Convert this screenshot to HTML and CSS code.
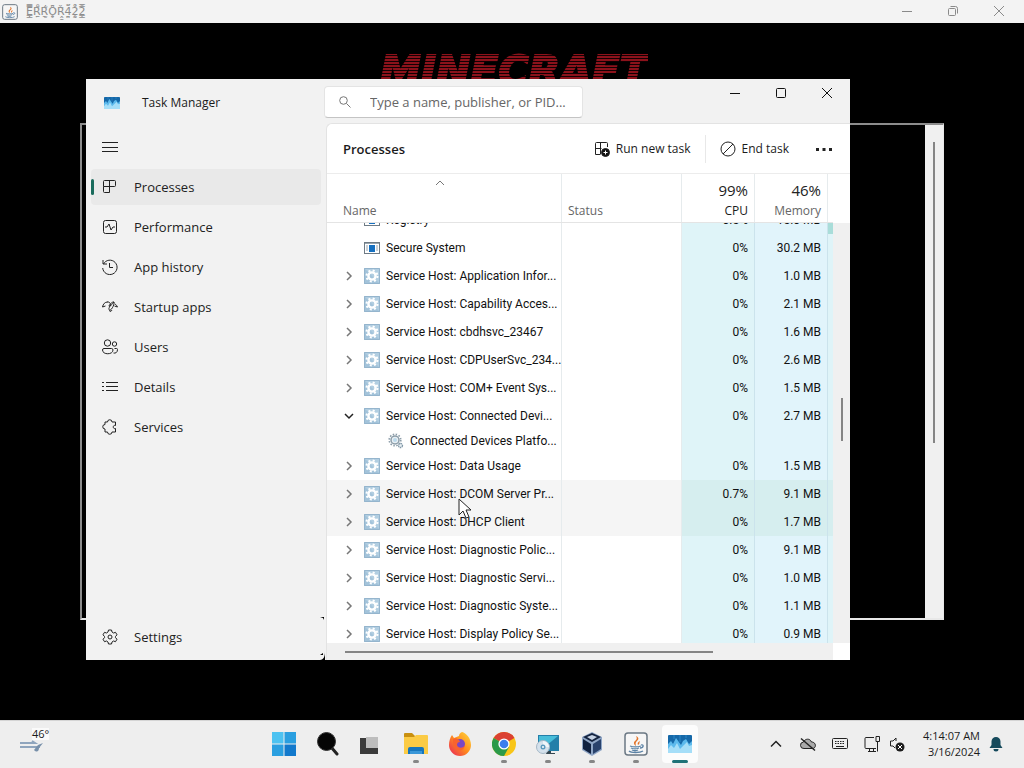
FILE: index.html
```html
<!DOCTYPE html>
<html lang="en">
<head>
    <meta charset="UTF-8">
    <meta name="viewport" content="width=device-width, initial-scale=1.0">
    <title>Desktop</title>
    <link rel="stylesheet" href="styles.css">
</head>
<body>
    <!-- shared icons -->
    <svg class="defs" width="0" height="0" aria-hidden="true">
        <symbol id="min" viewBox="0 0 12 12"><path d="M1 6.500h10" /></symbol>
        <symbol id="max" viewBox="0 0 12 12"><rect x="1.500" y="1.500" width="9" height="9" rx="1" /></symbol>
        <symbol id="restore" viewBox="0 0 12 12"><rect x="1.500" y="3.500" width="7" height="7" rx="1" /><path d="M3.500 1.500h5a2 2 0 0 1 2 2v5" /></symbol>
        <symbol id="close" viewBox="0 0 12 12"><path d="M1 1l10 10M11 1L1 11" /></symbol>
        <symbol id="chev" viewBox="0 0 8 10"><path d="M2 1l4 4-4 4" /></symbol>
        <symbol id="java" viewBox="0 0 24 24">
            <rect x="1" y="1" width="22" height="22" rx="3" fill="#f6f6f6" stroke="#6b7884" stroke-width="1.500" />
            <path d="M12 14c-4-3-1-5 0-6s1-2 0-4c4 2 2 4 1 5s-2 2-1 5zM14 13c-1-2 0-3 2-4-1 2 0 3-2 4z" fill="#e2742a" />
            <path d="M6 14c3 1 8 1 11 0M17 13c3-1 3 3-1 3M7 16c2 1 6 1 8 0M8 18c2 1 4 1 6 0M5 19c2 2 11 2 14 0" fill="none" stroke="#5b82a5" stroke-width="1.300" />
        </symbol>
        <symbol id="taskmgr" viewBox="0 0 24 18">
            <rect width="24" height="18" rx="1" fill="#1568a8" />
            <path d="M0 9l3-3 2 3 3-6 5 7 2-4 3-2 3 5 3-3v12H0z" fill="#5bb9ec" />
            <path d="M0 14l3-4 3 3 3-5 3 6 4-4 3-3 2 4 3-1v8H0z" fill="#a5def8" />
            <path d="M6 0v4M12 0v7M18 0v3" stroke="#2a86c6" stroke-width="1" />
        </symbol>
        <symbol id="gear" viewBox="0 0 16 16">
            <rect width="16" height="16" fill="#a3c3da" />
            <path d="M0 0h16v16" fill="#bdd5e6" opacity=".6" />
            <circle cx="8" cy="8" r="3.600" fill="none" stroke="#fff" stroke-width="2.400" />
            <circle cx="8" cy="8" r="5.500" fill="none" stroke="#fff" stroke-width="2" stroke-dasharray="2 2.320" />
            <path d="M.5.5h15v15H.5z" fill="none" stroke="#95b5cd" />
        </symbol>
        <symbol id="gears" viewBox="0 0 16 16">
            <circle cx="7" cy="7" r="4" fill="#e9f0f4" stroke="#8b9ca8" stroke-width="1.500" />
            <circle cx="7" cy="7" r="5.800" fill="none" stroke="#8b9ca8" stroke-width="1.600" stroke-dasharray="1.500 1.536" />
            <circle cx="7" cy="7" r="2" fill="#bcd9ea" />
            <circle cx="12.500" cy="12.500" r="2" fill="#e9f0f4" stroke="#7f96a6" stroke-width="1.300" stroke-dasharray="1.500 .6" />
        </symbol>
        <symbol id="app" viewBox="0 0 16 12">
            <rect x=".5" y=".5" width="15" height="11" fill="#fff" stroke="#6f7b85" />
            <path d="M1 1.500h14" stroke="#9aa6ae" />
            <rect x="5" y="3" width="6" height="7" fill="#1670c0" />
            <path d="M2 4h2M2 6h2M2 8h2M12 4h2M12 6h2M12 8h2" stroke="#95a3ad" />
        </symbol>
    </svg>

    <header class="app-bar">
        <svg class="app-logo"><use href="#java" /></svg>
        <span class="glitch">E&#x33f;&#x305;&#x333;&#x323;R&#x306;&#x30a;&#x323;&#x331;R&#x303;&#x307;&#x331;&#x32e;O&#x30a;&#x304;&#x325;&#x320;R&#x30c;&#x303;&#x32d;&#x331;4&#x30b;&#x306;&#x324;&#x32d;2&#x309;&#x30a;&#x330;&#x325;2&#x33f;&#x306;&#x333;&#x323;</span>
        <div class="controls muted">
            <button aria-label="Minimize"><svg><use href="#min" /></svg></button>
            <button aria-label="Restore"><svg><use href="#restore" /></svg></button>
            <button aria-label="Close"><svg><use href="#close" /></svg></button>
        </div>
    </header>

    <main class="desktop">
        <div class="game-title">MINECRAFT</div>
        <div class="console"><div class="console-scroll"></div></div>

        <section class="window">
            <div class="title-bar">
                <div class="title">
                    <svg width="16" height="12"><use href="#taskmgr" /></svg>
                    <span>Task Manager</span>
                </div>
                <label class="search">
                    <svg width="14" height="14" viewBox="0 0 14 14"><circle cx="5.500" cy="5.500" r="3.800" /><path d="M8.500 8.500l4 4" /></svg>
                    <input type="text" aria-label="Search processes" placeholder="Type a name, publisher, or PID...">
                </label>
                <div class="controls">
                    <button aria-label="Minimize"><svg><use href="#min" /></svg></button>
                    <button aria-label="Maximize"><svg><use href="#max" /></svg></button>
                    <button aria-label="Close"><svg><use href="#close" /></svg></button>
                </div>
            </div>

            <div class="window-body">
                <nav class="sidebar">
                    <button class="nav-item" aria-label="Menu"><svg viewBox="0 0 16 16"><path d="M0 3.500h16M0 8.500h16M0 12.500h16" /></svg></button>
                    <a href="#" class="nav-item active"><svg viewBox="0 0 16 16"><path d="M2.500 1.500h10a1 1 0 0 1 1 1v4a1 1 0 0 1-1 1h-11v-5a1 1 0 0 1 1-1zM7.500 1.500v12h-5a1 1 0 0 1-1-1v-5" /></svg>Processes</a>
                    <a href="#" class="nav-item"><svg viewBox="0 0 16 16"><rect x="1.500" y="1.500" width="13" height="13" rx="2" /><path d="M3 8h2l2-3 2 6 2-3h2" /></svg>Performance</a>
                    <a href="#" class="nav-item"><svg viewBox="0 0 16 16"><path d="M1 1v4h4M1.500 5a7.200 7.200 0 1 1-.8 4M7.500 4v4.500h3.500" /></svg>App history</a>
                    <a href="#" class="nav-item"><svg viewBox="0 0 16 16"><path d="M.5 8C1 5 3 3 5.500 3M13 5c1 .5 2 2 2.500 3M5 3c3-.5 4 2 3 4s-2 4 0 4 5-7 4-8-5 3-5 4 3-1 5-4M.5 8l3-1M15.500 8l-3-1M8 11c-1 2 1 2 2 0" /></svg>Startup apps</a>
                    <a href="#" class="nav-item"><svg viewBox="0 0 16 16"><circle cx="5.500" cy="4" r="3.200" /><circle cx="12.500" cy="5" r="2.200" /><path d="M2 9.500h7.500a1.500 1.500 0 0 1 1.500 1.500c0 5-10.500 5-10.500 0A1.500 1.500 0 0 1 2 9.500zM12.500 9.500h2a1 1 0 0 1 1 1c0 3-2 4-4 3.500" /></svg>Users</a>
                    <a href="#" class="nav-item"><svg viewBox="0 0 16 16"><path d="M4 3.500h12M4 7.500h12M4 11.500h12M0 3.500h2M0 7.500h2M0 11.500h2" /></svg>Details</a>
                    <a href="#" class="nav-item"><svg viewBox="0 0 16 16"><path d="M3 3h2.500a2.200 2.200 0 0 1 4.500 0h3.500v3.500c-3-1-3 4 0 3V13H10a2.200 2.200 0 0 1-4.500 0H3v-3a2.200 2.200 0 0 1 0-4.500z" /></svg>Services</a>
                    <a href="#" class="nav-item settings"><svg viewBox="0 0 16 16"><path d="M6.500 1h3l.5 2 1.500 1 2-.7 1.500 2.500L13.500 7.500v1.200l1.500 1.500-1.500 2.500-2-.7-1.500 1-.5 2h-3L6 13l-1.500-1-2 .7L1 10.200l1.500-1.500V7.500L1 5.800l1.500-2.500 2 .7L6 3z" /><circle cx="8" cy="8" r="2" /></svg>Settings</a>
                    <svg class="corner" width="8" height="44" viewBox="0 0 8 44"><path d="M2 1h4v3L5 2zM7 36v8H2c3 0 5-3 5-8zM2 39l3-2v2z" /></svg>
                </nav>

                <div class="content">
                    <div class="toolbar">
                        <h1>Processes</h1>
                        <button class="tool"><svg viewBox="0 0 16 16"><path d="M6 13.500H1.500v-11a1 1 0 0 1 1-1h10a1 1 0 0 1 1 1V6M6.500 1.500v12M1.500 7.500h6" /><circle cx="11.500" cy="11.500" r="4" fill="#111" /><path d="M9.500 11.500h4M11.500 9.500v4" stroke="#fff" /></svg>Run new task</button>
                        <button class="tool divided"><svg viewBox="0 0 16 16"><circle cx="8" cy="8" r="7" /><path d="M3 13L13 3" /></svg>End task</button>
                        <button class="tool more" aria-label="More"><svg viewBox="0 0 16 16"><path d="M0 7h3v3H0zM6.500 7h3v3h-3zM13 7h3v3h-3z" fill="#222" stroke="none" /></svg></button>
                    </div>

                    <div class="panes">
                        <table>
                            <thead>
                                <tr>
                                    <th><svg class="sort" width="10" height="6" viewBox="0 0 10 6"><path d="M1 5l4-4 4 4" /></svg>Name</th>
                                    <th>Status</th>
                                    <th class="num sorted"><b>99%</b>CPU</th>
                                    <th class="num"><b>46%</b>Memory</th>
                                    <th></th>
                                </tr>
                            </thead>
                            <tbody id="rows"></tbody>
                        </table>
                        <div class="vscroll"></div>
                        <div class="hscroll"></div>
                    </div>
                </div>
            </div>
        </section>

        <svg class="cursor" width="14" height="22" viewBox="0 0 14 22"><path d="M1 1v16l4-4 3 7 3-1-3-7h5z" fill="#fff" stroke="#222" /></svg>
    </main>

    <footer class="taskbar">
        <button class="weather" aria-label="Weather">
            <svg width="24" height="14" viewBox="0 0 24 14"><path d="M0 4h15l-3-2M0 8h20" stroke="#8fa5bd" stroke-width="2" fill="none" /><path d="M14 11c3 3 5 1 5-2l4-5-5 2z" fill="#7890aa" /></svg>
            <span>46&deg;</span>
        </button>
        <div class="apps">
            <button aria-label="Start"><svg viewBox="0 0 24 24"><path d="M0 0h11.500v11.500H0z" fill="#4cc2f1" /><path d="M12.500 0H24v11.500H12.500zM0 12.500h11.500V24H0z" fill="#2a9fe0" /><path d="M12.500 12.500H24V24H12.500z" fill="#1279cc" /></svg></button>
            <button aria-label="Search"><svg viewBox="0 0 24 24"><path d="M15 15l6 7" stroke="#222" stroke-width="3" stroke-linecap="round" /><circle cx="10.500" cy="9.500" r="9" fill="#050505" stroke="#333" /></svg></button>
            <button aria-label="Task view"><svg viewBox="0 0 24 24"><path d="M0 6h18v16H0z" fill="#3b3b3b" /><path d="M6 5h12v11H6z" fill="#bdbdbd" /></svg></button>
            <button class="open" aria-label="File Explorer"><svg viewBox="0 0 24 24"><path d="M0 2a1 1 0 0 1 1-1h7l3 3v3H0z" fill="#c99010" /><path d="M0 5h10l2-2h11a1 1 0 0 1 1 1v18H0z" fill="#fbcb45" /><path d="M4 22v-5a2 2 0 0 1 2-2h12a2 2 0 0 1 2 2v5z" fill="#1676bd" /><path d="M6 19h12v3H6z" fill="#3a97d8" /></svg></button>
            <button aria-label="Firefox"><svg viewBox="0 0 24 24"><defs><linearGradient id="ff" x1="1" y1="0" x2="0" y2="1"><stop offset="0" stop-color="#ffdc3c" /><stop offset=".5" stop-color="#ff8a1e" /><stop offset="1" stop-color="#e8205e" /></linearGradient></defs><path d="M14 0c4 1 9 6 9 13a11 11 0 0 1-22 0C1 9 2 6 4 3l2 3 5-2c0-2 1-3 3-4z" fill="url(#ff)" /><circle cx="12" cy="12" r="5" fill="#7a47c4" /><path d="M5 7c3-2 6 0 7 3-2 0-3 1-3 3 1 4 7 3 8 0-1 8-12 7-12-1z" fill="#f9632e" /></svg></button>
            <button class="open" aria-label="Chrome"><svg viewBox="0 0 24 24"><circle cx="12" cy="12" r="12" fill="#f8c517" /><path d="M12 12L1.600 6A12 12 0 0 1 22.400 6z" fill="#db4132" /><path d="M12 12L1.600 6A12 12 0 0 0 12 24l5-9z" fill="#2b9a49" /><circle cx="12" cy="12" r="5.600" fill="#fff" /><circle cx="12" cy="12" r="4.300" fill="#3b7ded" /></svg></button>
            <button class="open" aria-label="Remote Desktop"><svg viewBox="0 0 24 24"><rect x="2" y="3" width="21" height="16" fill="#237fa9" /><path d="M3 4h19L5 18H3z" fill="#47bdd9" /><path d="M11 19h4v2h4v1h-9z" fill="#344650" /><circle cx="7" cy="15" r="6.500" fill="#d4e1ec" stroke="#a4b7c6" /><path d="M7 9a6 6 0 0 1 6 6H7z" fill="#eff5fa" /><circle cx="7" cy="15" r="2.500" fill="#5c9abe" /><circle cx="7" cy="15" r="1" fill="#fff" /></svg></button>
            <button class="open" aria-label="VirtualBox"><svg viewBox="0 0 24 24"><path d="M12 0l10 5v13l-10 6-10-6V5z" fill="#8fa6c6" /><path d="M12 1l9 4-9 5-9-5z" fill="#14233f" /><path d="M3 7l8 5v10l-8-5z" fill="#10213f" /><path d="M21 7l-8 5v10l8-5z" fill="#29426c" /><path d="M12 3l5 2-5 3-5-3z" fill="#c6d3e5" /></svg></button>
            <button class="open" aria-label="Java"><svg><use href="#java" /></svg></button>
            <button class="open current" aria-label="Task Manager"><svg><use href="#taskmgr" /></svg></button>
        </div>
        <div class="tray">
            <button aria-label="Show hidden icons"><svg viewBox="0 0 16 16"><path d="M3 10.500l5-5 5 5" stroke-width="1.500" /></svg></button>
            <button aria-label="OneDrive"><svg viewBox="0 0 16 16"><path d="M4 12.500a3.200 3.200 0 0 1-.5-6.500C5 2.500 10 2 11.500 6c5 0 5 6.500 1 6.500z" fill="#aaa" /><path d="M1 2.500l14 12" stroke-width="1.500" /></svg></button>
            <button aria-label="Keyboard"><svg viewBox="0 0 16 16"><rect x=".5" y="2.500" width="15" height="10" rx="1" /><path d="M3 5.500h10M3 7.500h10" stroke-dasharray="1.500 1" /><path d="M4 10.500h8" /></svg></button>
            <button aria-label="Network"><svg viewBox="0 0 16 16"><path d="M10 1.500H2a1 1 0 0 0-1 1v9a1 1 0 0 0 1 1h10M4 15.500h8M5.500 12.500v3M9.500 12.500v3M12 .5h3.500v5H12zM13.500 5.500v10" /></svg></button>
            <button class="sound" aria-label="Sound"><svg viewBox="0 0 16 16"><path d="M7 2L4 5H1.500v5H4l2 2M7 2v3" /><circle cx="11" cy="11" r="4.500" fill="#1c1c1c" stroke="none" /><path d="M9 9l4 4M13 9l-4 4" stroke="#fff" /></svg></button>
            <button class="clock"><span>4:14:07 AM</span><span>3/16/2024</span></button>
            <button class="bell" aria-label="Notifications"><svg viewBox="0 0 16 16"><path d="M8 1a4.500 4.500 0 0 1 4.500 4.500V9l2 3h-13l2-3V5.500A4.500 4.500 0 0 1 8 1zM5.500 13h5a2.500 2.500 0 0 1-5 0z" fill="#164a5c" stroke="none" /></svg></button>
        </div>
    </footer>

    <script>
        const processes = [
            { name: 'Registry', cpu: '0.5%', mem: '15.0 MB', icon: 'app', busy: true },
            { name: 'Secure System', cpu: '0%', mem: '30.2 MB', icon: 'app' },
            { name: 'Service Host: Application Infor...', cpu: '0%', mem: '1.0 MB' },
            { name: 'Service Host: Capability Acces...', cpu: '0%', mem: '2.1 MB' },
            { name: 'Service Host: cbdhsvc_23467', cpu: '0%', mem: '1.6 MB' },
            { name: 'Service Host: CDPUserSvc_234...', cpu: '0%', mem: '2.6 MB' },
            { name: 'Service Host: COM+ Event Sys...', cpu: '0%', mem: '1.5 MB' },
            { name: 'Service Host: Connected Devi...', cpu: '0%', mem: '2.7 MB', expanded: true },
            { name: 'Connected Devices Platfo...', cpu: '', mem: '', icon: 'gears', child: true },
            { name: 'Service Host: Data Usage', cpu: '0%', mem: '1.5 MB' },
            { name: 'Service Host: DCOM Server Pr...', cpu: '0.7%', mem: '9.1 MB', hover: true },
            { name: 'Service Host: DHCP Client', cpu: '0%', mem: '1.7 MB', hover: true },
            { name: 'Service Host: Diagnostic Polic...', cpu: '0%', mem: '9.1 MB' },
            { name: 'Service Host: Diagnostic Servi...', cpu: '0%', mem: '1.0 MB' },
            { name: 'Service Host: Diagnostic Syste...', cpu: '0%', mem: '1.1 MB' },
            { name: 'Service Host: Display Policy Se...', cpu: '0%', mem: '0.9 MB' }
        ];

        const rows = document.getElementById('rows');

        processes.forEach(p => {
            const icon = p.icon || 'gear';
            const row = document.createElement('tr');
            ['child', 'hover', 'busy', 'expanded'].forEach(state => {
                if (p[state]) row.classList.add(state);
            });
            const arrow = p.icon ? '<span class="arrow"></span>'
                : '<button class="arrow" aria-label="Expand"><svg width="8" height="10"><use href="#chev" /></svg></button>';
            row.innerHTML = `
                <td class="name">${arrow}<svg width="16" height="16"><use href="#${icon}" /></svg><span>${p.name}</span></td>
                <td></td>
                <td class="num">${p.cpu}</td>
                <td class="num">${p.mem}</td>
                <td></td>`;
            rows.appendChild(row);
        });

        // start part way through the first row
        rows.scrollTop = 17;
    </script>
</body>
</html>
```
FILE: styles.css
```css
* {
    box-sizing: border-box;
}

body {
    margin: 0;
    height: 100vh;
    display: flex;
    flex-direction: column;
    overflow: hidden;
    background: #000;
    color: #1b1b1b;
    font-family: "Open Sans", "Noto Sans", sans-serif;
    font-size: 12px;
}

button,
input {
    font: inherit;
    color: inherit;
    background: none;
    border: none;
    padding: 0;
}

svg {
    flex: none;
}

.defs {
    position: absolute;
}

/* outer app title bar */
.app-bar {
    flex: none;
    height: 23px;
    display: flex;
    align-items: center;
    background: #f3f3f3;
    padding: 0 2px;
    overflow: hidden;
}

.app-logo {
    width: 16px;
    height: 16px;
    margin-right: 8px;
}

.glitch {
    color: #8d8d8d;
    font-family: "DejaVu Sans", sans-serif;
    font-size: 11px;
}

.controls {
    display: flex;
    margin-left: auto;
    align-self: flex-start;
}

.controls button {
    width: 46px;
    height: 28px;
    display: flex;
    align-items: center;
    justify-content: center;
}

.controls svg {
    width: 12px;
    height: 12px;
    fill: none;
    stroke: #111;
}

.controls.muted button {
    height: 21px;
}

.controls.muted svg {
    stroke: #8a8a8a;
}

/* desktop */
.desktop {
    flex: 1;
    position: relative;
    overflow: hidden;
    background: #000;
}

.game-title {
    position: absolute;
    top: 24px;
    left: 380px;
    font-family: "DejaVu Sans", sans-serif;
    font-size: 41px;
    font-weight: bold;
    font-style: italic;
    line-height: 48px;
    color: transparent;
    -webkit-text-stroke: 2px transparent;
    background: repeating-linear-gradient(#8c121b 0 2px, #140103 2px 3px);
    background-clip: text;
    -webkit-background-clip: text;
}

.console {
    position: absolute;
    top: 100px;
    right: 80px;
    bottom: 100px;
    left: 80px;
    display: flex;
    justify-content: flex-end;
    border: 2px solid #e8e8e8;
    border-top-color: #8c8c8c;
    border-left-color: #8c8c8c;
    border-right-width: 1px;
}

.console-scroll {
    width: 18px;
    padding: 17px 8px;
    background: #f0f0f0;
}

.console-scroll::before {
    content: '';
    display: block;
    width: 2px;
    height: 301px;
    background: #858585;
}

/* task manager window */
.window {
    position: absolute;
    top: 56px;
    right: 174px;
    bottom: 60px;
    left: 86px;
    display: flex;
    flex-direction: column;
    background: #f2f2f2;
}

.title-bar {
    flex: none;
    height: 44px;
    display: flex;
}

.title {
    width: 238px;
    display: flex;
    align-items: center;
    gap: 22px;
    padding: 3px 0 0 18px;
}

.search {
    width: 259px;
    height: 32px;
    margin-top: 7px;
    display: flex;
    align-items: center;
    gap: 18px;
    padding: 0 8px 0 13px;
    background: #fff;
    border: 1px solid #e4e4e4;
    border-bottom-color: #c4c4c4;
    border-radius: 4px;
}

.search svg {
    fill: none;
    stroke: #777;
}

.search input {
    flex: 1;
    min-width: 0;
    font-size: 13px;
    outline: none;
}

.search input::placeholder {
    color: #666;
}

.window-body {
    flex: 1;
    min-height: 0;
    display: flex;
}

.sidebar {
    position: relative;
    width: 240px;
    display: flex;
    flex-direction: column;
    gap: 4px;
    padding: 6px 5px 5px;
}

.nav-item {
    position: relative;
    height: 36px;
    display: flex;
    align-items: center;
    gap: 16px;
    padding-left: 11px;
    border-radius: 4px;
    color: #222;
    font-size: 13px;
    text-decoration: none;
}

.nav-item svg {
    width: 16px;
    height: 16px;
    fill: none;
    stroke: #222;
}

.nav-item.active {
    background: #e9e9e9;
}

.nav-item.active::before {
    content: '';
    position: absolute;
    left: 0;
    width: 3px;
    height: 16px;
    border-radius: 2px;
    background: #1a6b5c;
}

.settings {
    margin-top: auto;
}

.corner {
    position: absolute;
    right: 0;
    bottom: 0;
}

.content {
    flex: 1;
    min-width: 0;
    display: flex;
    flex-direction: column;
    background: #fff;
    border: 1px solid #e3e3e3;
    border-width: 1px 0 0 1px;
    border-radius: 6px 0 0 0;
}

.toolbar {
    flex: none;
    height: 50px;
    display: flex;
    align-items: center;
    padding: 0 18px 0 16px;
    border-bottom: 1px solid #ececec;
}

.toolbar h1 {
    margin: 0 auto 0 0;
    font-size: 13px;
    font-weight: 600;
}

.tool {
    height: 28px;
    display: flex;
    align-items: center;
    gap: 6px;
}

.tool svg {
    width: 16px;
    height: 16px;
    fill: none;
    stroke: #222;
}

.tool.divided {
    margin-left: 14px;
    padding-left: 14px;
    border-left: 1px solid #e8e8e8;
}

.tool.more {
    margin-left: 27px;
}

.panes {
    flex: 1;
    min-height: 0;
    display: grid;
    grid-template-columns: 1fr 17px;
    grid-template-rows: minmax(0, 1fr) 17px;
}

.vscroll {
    margin-top: 49px;
    padding: 175px 8px 0;
    background: #f0f0f0;
}

.vscroll::before {
    content: '';
    display: block;
    width: 2px;
    height: 43px;
    background: #858585;
}

.hscroll {
    padding: 8px 120px 0 18px;
    background: #f0f0f0;
}

.hscroll::before {
    content: '';
    display: block;
    height: 2px;
    background: #858585;
}

/* process table */
table {
    min-height: 0;
    display: flex;
    flex-direction: column;
}

thead {
    display: block;
}

tbody {
    display: block;
    flex: 1;
    min-height: 0;
    overflow: hidden;
}

tr {
    height: 28px;
    display: grid;
    grid-template-columns: 235px 1fr 73px 73px 5px;
}

th,
td {
    display: flex;
    align-items: center;
    padding: 0 6px;
    border-right: 1px solid #e6ebed;
    text-align: left;
    font-weight: normal;
    white-space: nowrap;
}

th:last-child,
td:last-child {
    padding: 0;
    border-right: none;
}

thead tr {
    height: 49px;
    border-bottom: 1px solid #e4e4e4;
}

th {
    position: relative;
    flex-direction: column;
    align-items: flex-start;
    justify-content: flex-end;
    padding-bottom: 3px;
    line-height: 16px;
    color: #666;
}

th:first-child {
    padding-left: 16px;
}

th b {
    margin-bottom: 3px;
    font-size: 15px;
    font-weight: normal;
    line-height: 20px;
    color: #222;
}

th.sorted {
    color: #1b1b1b;
}

th.num {
    align-items: flex-end;
}

.sort {
    position: absolute;
    top: 6px;
    right: 116px;
    fill: none;
    stroke: #777;
}

td {
    font-family: Roboto, "Open Sans", sans-serif;
    color: #111;
}

td.num {
    justify-content: flex-end;
}

td:nth-child(n+3) {
    background: #dff4f8;
    border-right-color: #cbe3ec;
}

td:nth-child(4) {
    background: #e1f4fb;
}

.child {
    height: 22px;
}

.hover td {
    background: #f5f5f5;
}

.hover td:nth-child(n+3) {
    background: #d6eeef;
}

.busy td:last-child {
    background: #a9ddd9;
}

td.name {
    padding: 0 0 0 14px;
}

.arrow {
    flex: none;
    width: 16px;
    height: 16px;
    margin-right: 7px;
    display: flex;
    align-items: center;
    justify-content: center;
}

.arrow svg {
    fill: none;
    stroke: #777;
    stroke-width: 1.5px;
}

.expanded .arrow svg {
    transform: rotate(90deg);
    stroke: #222;
}

.name span:last-child {
    margin-left: 6px;
}

.child td.name {
    padding-left: 38px;
}

.cursor {
    position: absolute;
    top: 475px;
    left: 458px;
}

/* taskbar */
.taskbar {
    flex: none;
    height: 48px;
    display: flex;
    align-items: center;
    background: #eee;
    box-shadow: inset 0 1px #d4d4d4;
}

.weather {
    width: 242px;
    margin-left: 20px;
    position: relative;
    text-align: left;
}

.weather svg {
    display: block;
    margin-top: 4px;
}

.weather span {
    position: absolute;
    top: -7px;
    left: 12px;
    font-size: 11px;
    line-height: 12px;
    background: #fafafa;
}

.apps {
    display: flex;
}

.apps button {
    position: relative;
    width: 36px;
    height: 38px;
    margin: 0 4px;
    display: flex;
    align-items: center;
    justify-content: center;
    border-radius: 4px;
}

.apps svg {
    width: 24px;
    height: 24px;
}

.apps .current {
    background: #fcfcfc;
}

.open::after {
    content: '';
    position: absolute;
    bottom: 0;
    left: 15px;
    width: 6px;
    height: 3px;
    border-radius: 2px;
    background: #868686;
}

.current::after {
    left: 10px;
    width: 16px;
    background: #1e7277;
}

.tray {
    margin-left: auto;
    display: flex;
    align-items: center;
    padding-right: 20px;
}

.tray button {
    width: 32px;
    height: 32px;
    display: flex;
    align-items: center;
    justify-content: center;
}

.tray svg {
    width: 16px;
    height: 16px;
    fill: none;
    stroke: #222;
}

.tray .sound {
    width: 18px;
}

.tray .clock {
    width: 74px;
    flex-direction: column;
    align-items: flex-end;
    font-size: 11px;
    line-height: 16px;
}

.tray .bell {
    width: 16px;
    margin-left: 8px;
}
```
